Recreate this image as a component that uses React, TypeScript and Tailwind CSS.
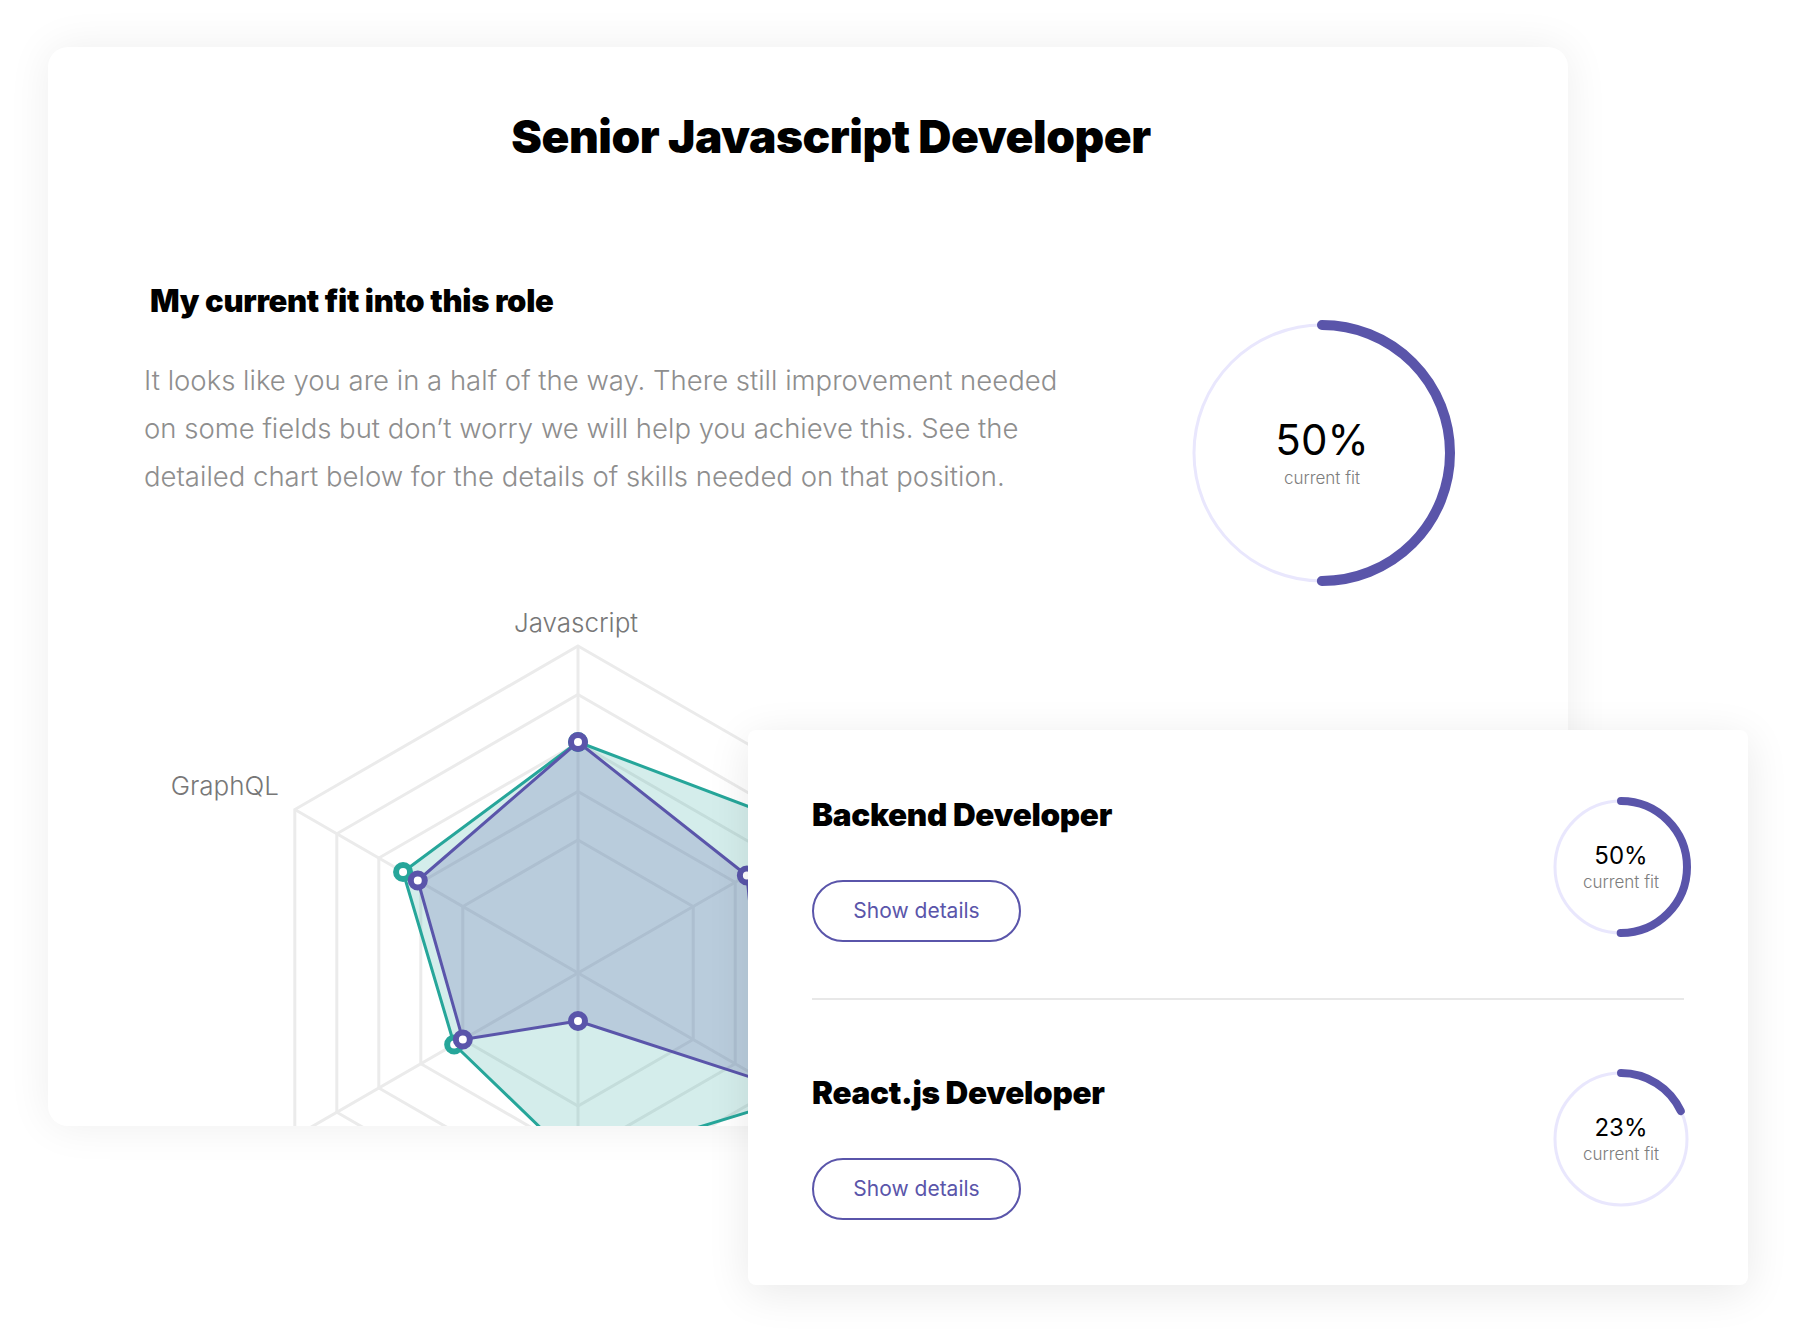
import React from 'react'

const PURPLE = '#5a55aa'
const TEAL = '#26a69a'

// radar geometry, in the chart svg's own coordinates
const CX = 430
const CY = 373
const RINGS = [133, 181.5, 230, 278.5, 327]
const ANGLES = [-90, -30, 30, 90, 150, 210]
const PURPLE_VALUES = [231, 195, 220, 48, 133, 185]
const TEAL_VALUES = [231, 279, 250, 191, 143, 202]

const pt = (r: number, a: number): [number, number] => [
  CX + r * Math.cos((a * Math.PI) / 180),
  CY + r * Math.sin((a * Math.PI) / 180),
]

const poly = (values: number[]) =>
  values.map((v, i) => pt(v, ANGLES[i]).join(',')).join(' ')

const FitRing = ({
  size,
  r,
  stroke,
  pct,
  value,
  big = false,
}: {
  size: number
  r: number
  stroke: number
  pct: number
  value: string
  big?: boolean
}) => {
  const c = size / 2
  const len = 2 * Math.PI * r
  return (
    <div className="relative" style={{ width: size, height: size }}>
      <svg width={size} height={size} viewBox={`0 0 ${size} ${size}`}>
        <circle cx={c} cy={c} r={r} fill="none" stroke="#e9e7fd" strokeWidth={3} />
        <circle
          cx={c}
          cy={c}
          r={r}
          fill="none"
          stroke={PURPLE}
          strokeWidth={stroke}
          strokeLinecap="round"
          strokeDasharray={`${len * pct} ${len}`}
          transform={`rotate(-90 ${c} ${c})`}
        />
      </svg>
      <div className="absolute inset-0 flex flex-col items-center justify-center">
        {big ? (
          <>
            <span className="text-[42px] leading-[42px] font-normal text-black">{value}</span>
            <span className="mt-[7px] text-[17px] leading-[20px] font-light text-[#7d7d7d]">current fit</span>
          </>
        ) : (
          <>
            <span className="text-[24px] leading-[26px] font-normal text-black">{value}</span>
            <span className="mt-[3px] text-[17px] leading-[20px] font-light text-[#7d7d7d]">current fit</span>
          </>
        )}
      </div>
    </div>
  )
}

const RoleRow = ({
  title,
  pct,
  value,
  ringOffset,
}: {
  title: string
  pct: number
  value: string
  ringOffset: string
}) => (
  <div className="flex items-start">
    <div className="flex flex-col items-start">
      <h3 className="text-[31.5px] leading-[40px] font-black tracking-[-0.01em] text-black">{title}</h3>
      <button className="mt-[45px] w-[209px] h-[62px] rounded-full border-2 border-[#5a55aa] text-[21px] font-normal text-[#5a55aa]">
        Show details
      </button>
    </div>
    <div className={`ml-auto -mr-[12px] ${ringOffset}`}>
      <FitRing size={150} r={66} stroke={8} pct={pct} value={value} />
    </div>
  </div>
)

const Radar = () => (
  <svg width={860} height={540} viewBox="0 0 860 540" className="ml-[100px] mt-[7px] block">
    {RINGS.map((r) => (
      <polygon
        key={r}
        points={ANGLES.map((a) => pt(r, a).join(',')).join(' ')}
        fill="none"
        stroke="#ebebeb"
        strokeWidth={3}
      />
    ))}
    {ANGLES.map((a) => {
      const [x, y] = pt(RINGS[RINGS.length - 1], a)
      return <line key={a} x1={CX} y1={CY} x2={x} y2={y} stroke="#ebebeb" strokeWidth={3} />
    })}

    <polygon points={poly(TEAL_VALUES)} fill="rgba(38,166,154,0.2)" stroke={TEAL} strokeWidth={3} strokeLinejoin="round" />
    <polygon points={poly(PURPLE_VALUES)} fill="rgba(90,85,170,0.22)" stroke={PURPLE} strokeWidth={3} strokeLinejoin="round" />

    {TEAL_VALUES.map((v, i) => {
      const [x, y] = pt(v, ANGLES[i])
      return <circle key={'t' + i} cx={x} cy={y} r={7} fill="#fff" stroke={TEAL} strokeWidth={6} />
    })}
    {PURPLE_VALUES.map((v, i) => {
      const [x, y] = pt(v, ANGLES[i])
      return <circle key={'p' + i} cx={x} cy={y} r={7} fill="#fff" stroke={PURPLE} strokeWidth={6} />
    })}

    <text x={428} y={25} textAnchor="middle" dominantBaseline="middle" fontSize={26} fill="#777" fontFamily="Inter, sans-serif" fontWeight={300}>
      Javascript
    </text>
    <text x={131} y={188} textAnchor="end" dominantBaseline="middle" fontSize={26} fill="#777" fontFamily="Inter, sans-serif" fontWeight={300}>
      GraphQL
    </text>
  </svg>
)

export default function App() {
  return (
    <div className="relative w-[1796px] h-[1336px] overflow-hidden bg-white font-['Inter',sans-serif]">
      <div className="pt-[47px] pl-[48px]">
        <div className="w-[1520px] h-[1079px] overflow-hidden rounded-[20px] bg-white shadow-[0_0_44px_rgba(0,0,0,0.07)]">
          <h1 className="pt-[66px] pl-[46px] text-center text-[46px] leading-[46px] font-black tracking-[-0.01em] text-black">
            Senior Javascript Developer
          </h1>

          <div className="mt-[122px] flex pl-[96px] pr-[106px]">
            <div>
              <h2 className="pl-[6px] text-[31px] leading-[40px] font-black tracking-[-0.01em] text-black">
                My current fit into this role
              </h2>
              <p className="mt-[35px] text-[27.5px] leading-[48px] font-light text-[#8e8e8e]">
                It looks like you are in a half of the way. There still improvement needed
                <br />
                on some fields but don’t worry we will help you achieve this. See the
                <br />
                detailed chart below for the details of skills needed on that position.
              </p>
            </div>
            <div className="ml-auto mt-[32px]">
              <FitRing size={280} r={128} stroke={10} pct={0.5} value="50%" big />
            </div>
          </div>

          <Radar />
        </div>
      </div>

      {/* overlapping role list */}
      <div className="absolute left-[748px] top-[730px] w-[1000px] h-[555px] rounded-[8px] bg-white px-[64px] pt-[65px] shadow-[0_8px_44px_rgba(0,0,0,0.09)]">
        <RoleRow title="Backend Developer" pct={0.5} value="50%" ringOffset="-mt-[3px]" />
        <div className="mt-[56px] h-[2px] bg-[#e8e8e8]" />
        <div className="mt-[73px]">
          <RoleRow title="React.js Developer" pct={0.18} value="23%" ringOffset="-mt-[9px]" />
        </div>
      </div>
    </div>
  )
}
